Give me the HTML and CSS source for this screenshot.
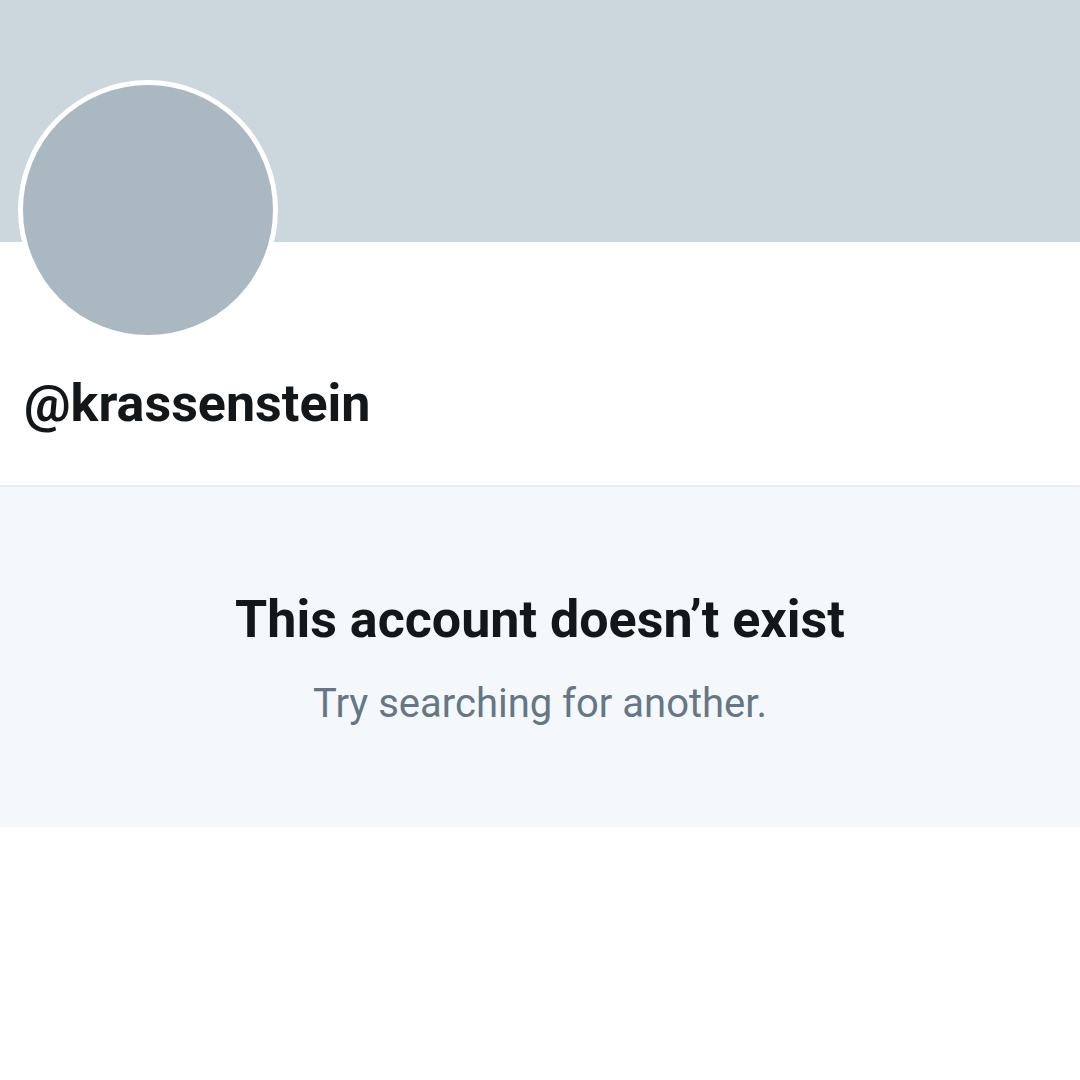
FILE: index.html
```html
<!DOCTYPE html>
<html lang="en">
<head>
  <meta charset="UTF-8">
  <meta name="viewport" content="width=device-width, initial-scale=1.0">
  <title>@krassenstein</title>
  <link rel="stylesheet" href="styles.css">
</head>
<body>
  <div class="banner"></div>

  <div class="profile">
    <div class="avatar"></div>
    <div class="handle">@krassenstein</div>
  </div>

  <div class="empty-state">
    <div class="empty-title">This account doesn’t exist</div>
    <div class="empty-sub">Try searching for another.</div>
  </div>
</body>
</html>
```

FILE: styles.css
```css
body {
  margin: 0;
  background: #fff;
  font-family: Roboto, "Noto Sans", sans-serif;
}

/* Header image area */
.banner {
  height: 242px;
  background: #ccd6dd;
}

/* Avatar + handle */
.profile {
  display: flex;
  flex-direction: column;
  align-items: flex-start;
  box-sizing: border-box;
  height: 245px;
  padding: 0 24px;
  border-bottom: 2px solid #e6ecf0;
}

.avatar {
  flex: none;
  width: 250px;
  height: 250px;
  margin-top: -162px;
  margin-left: -6px;
  border-radius: 50%;
  background: #aab8c2;
  border: 5px solid #fff;
}

.handle {
  margin-top: 33px;
  font-size: 52px;
  font-weight: 700;
  color: #14171a;
  line-height: 1.2;
}

/* "Doesn't exist" block */
.empty-state {
  box-sizing: border-box;
  height: 340px;
  padding-top: 99px;
  background: #f5f8fa;
  text-align: center;
}

.empty-title {
  font-size: 52px;
  font-weight: 700;
  color: #14171a;
  line-height: 1.3;
}

.empty-sub {
  margin-top: 24px;
  font-size: 40px;
  color: #657786;
  line-height: 1.3;
}
```
